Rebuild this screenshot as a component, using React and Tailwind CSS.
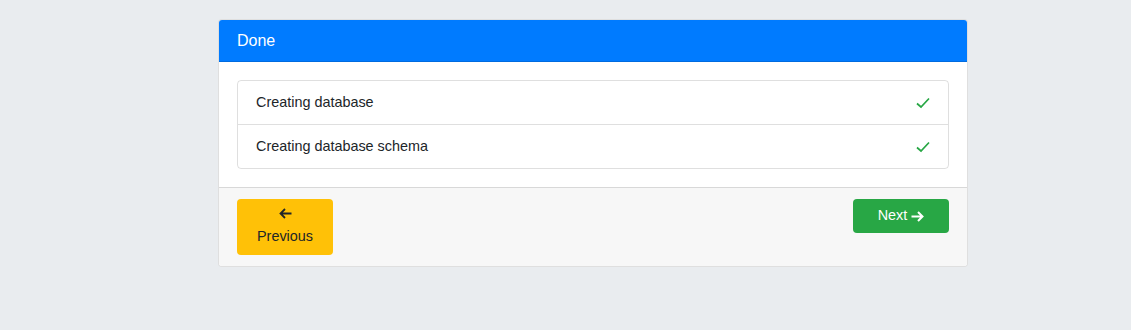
import React from 'react';

const steps = ['Creating database', 'Creating database schema'];

function Check() {
  return (
    <svg width="14" height="12" viewBox="0 0 14 12" fill="none">
      <path d="M1 6.5 L5 10 L13 1.5" stroke="#28a745" strokeWidth="1.7" />
    </svg>
  );
}

function ArrowLeft() {
  return (
    <svg width="13" height="11" viewBox="0 0 13 11" fill="none">
      <path d="M12.5 5.5 H1.5 M6 1 L1.5 5.5 L6 10" stroke="#212529" strokeWidth="1.8" />
    </svg>
  );
}

function ArrowRight() {
  return (
    <svg width="13" height="11" viewBox="0 0 13 11" fill="none">
      <path d="M0.5 5.5 H11.5 M7 1 L11.5 5.5 L7 10" stroke="#ffffff" strokeWidth="2" />
    </svg>
  );
}

export default function App() {
  return (
    <div className="min-h-[330px] bg-[#e9ecef] pt-[19px] font-['Liberation_Sans',Arial,sans-serif] text-[#212529]">
      <div className="ml-[218px] w-[750px] border border-black/[.125] rounded bg-white overflow-hidden">
        <div className="h-[41px] bg-[#007bff] text-white text-[16px] px-[18px] flex items-center border-b border-black/[.125] box-content">
          Done
        </div>
        <div className="p-[18px]">
          <div className="border border-black/[.125] rounded">
            {steps.map((s, i) => (
              <div
                key={s}
                className={`h-[43px] flex items-center justify-between px-[18px] text-[14.4px] ${i > 0 ? 'border-t border-black/[.125] h-[44px]' : ''}`}
              >
                <span>{s}</span>
                <Check />
              </div>
            ))}
          </div>
        </div>
        <div className="bg-[#f7f7f7] border-t border-black/[.125] px-[18px] pt-[11px] pb-[11px] flex justify-between items-start">
          <button className="w-[96px] h-[56px] bg-[#ffc107] rounded text-[14.4px] text-[#212529] flex flex-col items-center pt-[9px]">
            <ArrowLeft />
            <span className="mt-[7px] leading-[21.6px]">Previous</span>
          </button>
          <button className="w-[96px] h-[34px] bg-[#28a745] rounded text-[14.4px] text-white flex items-center justify-center gap-[4px]">
            <span>Next</span>
            <ArrowRight />
          </button>
        </div>
      </div>
    </div>
  );
}
